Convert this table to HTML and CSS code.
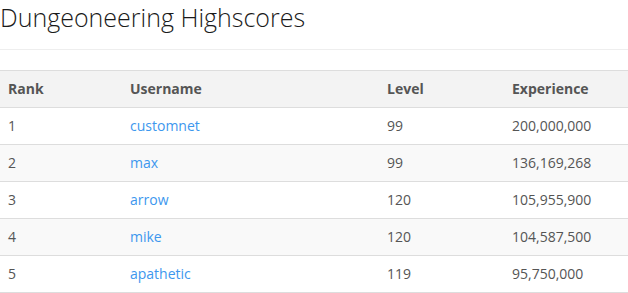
FILE: index.html
```html
<!DOCTYPE html>
<html>
<head>
<meta charset="utf-8">
<link rel="stylesheet" href="styles.css">
</head>
<body>
<div class="page">
  <h1 class="title">Dungeoneering Highscores</h1>
  <hr class="rule">
  <table class="scores">
    <thead>
      <tr><th class="c-rank">Rank</th><th class="c-user">Username</th><th class="c-level">Level</th><th class="c-exp">Experience</th></tr>
    </thead>
    <tbody>
      <tr><td>1</td><td><a href="#">customnet</a></td><td>99</td><td>200,000,000</td></tr>
      <tr><td>2</td><td><a href="#">max</a></td><td>99</td><td>136,169,268</td></tr>
      <tr><td>3</td><td><a href="#">arrow</a></td><td>120</td><td>105,955,900</td></tr>
      <tr><td>4</td><td><a href="#">mike</a></td><td>120</td><td>104,587,500</td></tr>
      <tr><td>5</td><td><a href="#">apathetic</a></td><td>119</td><td>95,750,000</td></tr>
    </tbody>
  </table>
</div>
</body>
</html>
```
FILE: styles.css
```css
html, body {
  margin: 0;
  padding: 0;
  background: #fff;
}
body {
  font-family: "Open Sans", "Liberation Sans", sans-serif;
  font-size: 14px;
  color: #555;
}
.page {
  width: 628px;
}
.title {
  margin: 0;
  padding: 0;
  font-size: 25px;
  font-weight: 300;
  color: #1a1a1a;
  line-height: 34px;
  height: 34px;
}
.rule {
  margin: 15px 0 0 0;
  border: 0;
  border-top: 1px solid #eee;
  height: 0;
}
.scores {
  margin-top: 20px;
  width: 628px;
  border-collapse: collapse;
  table-layout: fixed;
}
.scores th, .scores td {
  text-align: left;
  padding: 0 8px;
  height: 36px;
  border-top: 1px solid #ddd;
  vertical-align: middle;
  line-height: 20px;
}
.scores tr:last-child td {
  border-bottom: 1px solid #ddd;
}
.scores th {
  background: #f3f3f3;
  font-weight: 700;
  color: #555;
}
.scores tbody tr:nth-child(even) td {
  background: #f9f9f9;
}
.c-rank { width: 106px; }
.c-user { width: 241px; }
.c-level { width: 109px; }
.scores a {
  color: #3d97ee;
  text-decoration: none;
}
```
